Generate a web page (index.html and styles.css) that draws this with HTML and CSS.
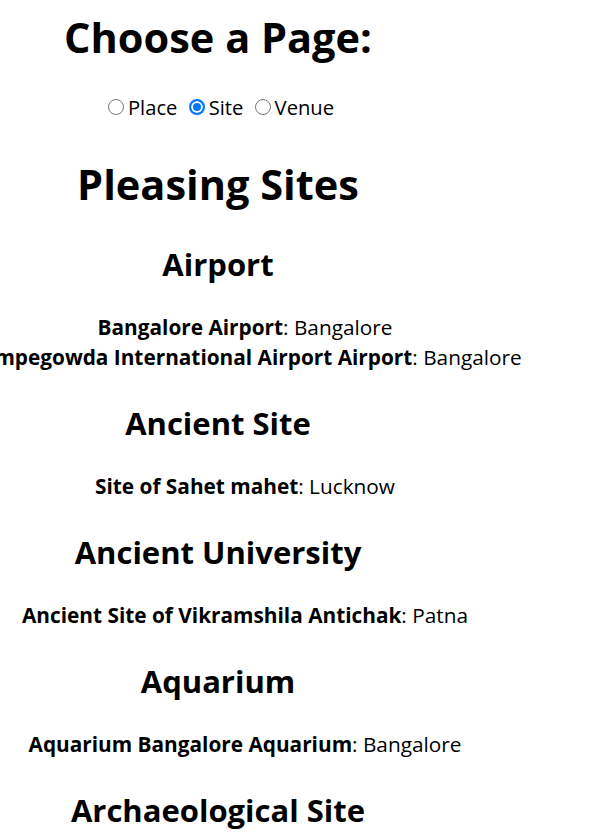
FILE: index.html
```html
<!DOCTYPE html>
<html>
<head>
  <meta charset="UTF-8">
  <title>Pleasing Sites</title>
  <link rel="stylesheet" href="styles.css">
</head>
<body>
  <div class="page">
    <h1 class="page-title">Choose a Page:</h1>
    <div class="chooser">
      <input type="radio" name="page" id="pagePlace"><label for="pagePlace">Place</label>
      <input type="radio" name="page" id="pageSite" checked><label for="pageSite">Site</label>
      <input type="radio" name="page" id="pageVenue"><label for="pageVenue">Venue</label>
    </div>

    <h1 class="list-title">Pleasing Sites</h1>

    <h2 class="category">Airport</h2>
    <div class="site-list">
      <div><b>Bangalore Airport</b>: Bangalore</div>
      <div><b>Kempegowda International Airport Airport</b>: Bangalore</div>
    </div>

    <h2 class="category">Ancient Site</h2>
    <div class="site-list">
      <div><b>Site of Sahet mahet</b>: Lucknow</div>
    </div>

    <h2 class="category">Ancient University</h2>
    <div class="site-list">
      <div><b>Ancient Site of Vikramshila Antichak</b>: Patna</div>
    </div>

    <h2 class="category">Aquarium</h2>
    <div class="site-list">
      <div><b>Aquarium Bangalore Aquarium</b>: Bangalore</div>
    </div>

    <h2 class="category">Archaeological Site</h2>
  </div>
</body>
</html>
```

FILE: styles.css
```css
body {
  margin: 0;
  background-color: #fff;
  color: #000;
  font-family: "Open Sans", "Noto Sans", sans-serif;
}

.page {
  width: 436px;
  display: flex;
  flex-direction: column;
  align-items: center;
  text-align: center;
}

.page-title {
  font-size: 41.5px;
  line-height: 53px;
  margin: 11px 0 30px;
}

.chooser {
  font-size: 20.2px;
  line-height: 27px;
  margin-bottom: 37px;
}

.chooser input {
  appearance: none;
  box-sizing: border-box;
  width: 16px;
  height: 16px;
  margin: 0 4px 0 6px;
  border: 1.25px solid #767676;
  border-radius: 50%;
  background-color: #fff;
  vertical-align: baseline;
}

.chooser input:checked {
  border: 2px solid #0075ff;
  background-color: #0075ff;
  box-shadow: inset 0 0 0 2px #fff;
}

.list-title {
  font-size: 41.5px;
  line-height: 53px;
  margin: 0 0 2px;
}

.category {
  font-size: 31px;
  line-height: 40px;
  margin: 31px 0 28px;
  white-space: nowrap;
}

.site-list {
  font-size: 20.8px;
  line-height: 30px;
  padding-left: 54px;
  white-space: nowrap;
}
```
